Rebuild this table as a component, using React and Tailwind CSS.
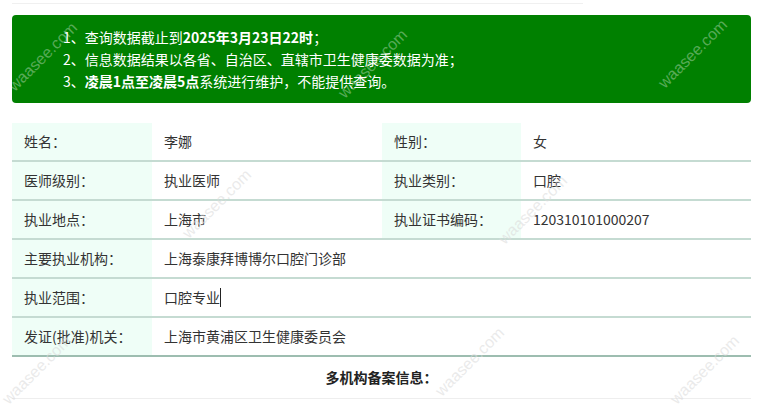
import React from "react";

const font = { fontFamily: '"Noto Sans CJK SC", "Noto Sans", sans-serif' };

function Row({ cells, last }) {
  return (
    <div className={`flex h-[39px] border-b-2 ${last ? "border-[#9dbdb0]" : "border-[#c5dbd2]"}`}>
      {cells}
    </div>
  );
}

const Label = ({ children, w }) => (
  <div className={`${w} shrink-0 bg-[#effef7] pl-3 flex items-center`}>{children}</div>
);
const Value = ({ children, className = "" }) => (
  <div className={`pl-3 flex items-center ${className}`}>{children}</div>
);

function WM({ x, y, light }) {
  return (
    <div
      className={`absolute pointer-events-none text-[16px] -rotate-45 select-none ${light ? "text-white/35" : "text-[#dcdcdc]/60"}`}
      style={{ left: x, top: y, fontFamily: '"Liberation Sans", sans-serif' }}
    >
      waasee.com
    </div>
  );
}

export default function App() {
  return (
    <div className="relative w-[763px] h-[406px] overflow-hidden bg-white text-[14px] text-[#333]" style={font}>
      <div className="px-3 pt-[3px]">
        <div className="h-px w-[571px] bg-[#f0f0f0]" />
        <div className="mt-[11px] rounded-[4px] bg-[#008000] pl-[51px] py-[11px] text-white leading-[22px]">
          <div>1、查询数据截止到<b>2025年3月23日22时</b>；</div>
          <div>2、信息数据结果以各省、自治区、直辖市卫生健康委数据为准；</div>
          <div>3、<b>凌晨1点至凌晨5点</b>系统进行维护，不能提供查询。</div>
        </div>
        <div className="mt-[20px]">
          <Row cells={<>
            <Label w="w-[140px]">姓名：</Label>
            <Value className="w-[230px]">李娜</Value>
            <Label w="w-[139px]">性别：</Label>
            <Value className="flex-1">女</Value>
          </>} />
          <Row cells={<>
            <Label w="w-[140px]">医师级别：</Label>
            <Value className="w-[230px]">执业医师</Value>
            <Label w="w-[139px]">执业类别：</Label>
            <Value className="flex-1">口腔</Value>
          </>} />
          <Row cells={<>
            <Label w="w-[140px]">执业地点：</Label>
            <Value className="w-[230px]">上海市</Value>
            <Label w="w-[139px]">执业证书编码：</Label>
            <Value className="flex-1">120310101000207</Value>
          </>} />
          <Row cells={<>
            <Label w="w-[140px]">主要执业机构：</Label>
            <Value className="flex-1">上海泰康拜博博尔口腔门诊部</Value>
          </>} />
          <Row cells={<>
            <Label w="w-[140px]">执业范围：</Label>
            <Value className="flex-1">口腔专业<span className="inline-block w-px h-[19px] bg-[#222]" /></Value>
          </>} />
          <Row last cells={<>
            <Label w="w-[140px]">发证(批准)机关：</Label>
            <Value className="flex-1">上海市黄浦区卫生健康委员会</Value>
          </>} />
          <div className="h-[42px] flex items-center justify-center font-bold text-[#222] border-b border-[#eeeeee]">
            多机构备案信息：
          </div>
        </div>
      </div>
      <WM x={-2} y={45} light />
      <WM x={328} y={52} light />
      <WM x={648} y={42} light />
      <WM x={172} y={192} />
      <WM x={488} y={198} />
      <WM x={-8} y={358} />
      <WM x={425} y={350} />
      <WM x={660} y={358} />
    </div>
  );
}
